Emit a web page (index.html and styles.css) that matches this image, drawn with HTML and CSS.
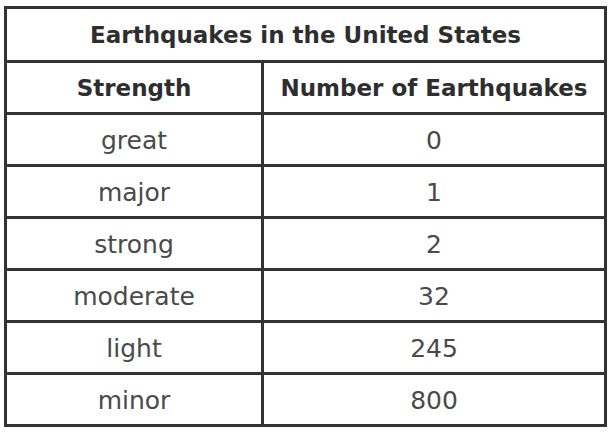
FILE: index.html
```html
<!DOCTYPE html>
<html lang="en">
<head>
<meta charset="utf-8">
<title>Earthquakes in the United States</title>
<link rel="stylesheet" href="styles.css">
</head>
<body>
<table class="quakes">
  <colgroup><col class="c-strength"><col class="c-count"></colgroup>
  <thead>
    <tr class="title-row"><th colspan="2" class="title">Earthquakes in the United States</th></tr>
    <tr class="head-row"><th class="col1">Strength</th><th class="col2">Number of Earthquakes</th></tr>
  </thead>
  <tbody>
    <tr><td class="col1">great</td><td class="col2">0</td></tr>
    <tr><td class="col1">major</td><td class="col2">1</td></tr>
    <tr><td class="col1">strong</td><td class="col2">2</td></tr>
    <tr><td class="col1">moderate</td><td class="col2">32</td></tr>
    <tr><td class="col1">light</td><td class="col2">245</td></tr>
    <tr><td class="col1">minor</td><td class="col2">800</td></tr>
  </tbody>
</table>
</body>
</html>
```
FILE: styles.css
```css
html, body {
  margin: 0;
  padding: 0;
  background: #ffffff;
}
body {
  padding: 6px 0 0 4px;
  font-family: "DejaVu Sans", sans-serif;
}
.quakes {
  width: 603px;
  border: 3px solid #333333;
  border-spacing: 0;
  border-collapse: separate;
  table-layout: fixed;
}
.c-strength { width: 257px; }
.c-count { width: 340px; }
.quakes th, .quakes td {
  padding: 0;
  text-align: center;
  vertical-align: middle;
  border-top: 3px solid #333333;
  height: 49px;
  line-height: 28px;
}
.quakes .title-row th {
  border-top: 0;
  height: 51px;
}
.quakes th {
  font-weight: 700;
  font-size: 23px;
  color: #2e2e2e;
}
.quakes td {
  font-weight: 400;
  font-size: 25px;
  color: #4a4a4a;
  padding-top: 2px;
  height: 47px;
}
.quakes .col1 {
  border-right: 3px solid #333333;
}
```
